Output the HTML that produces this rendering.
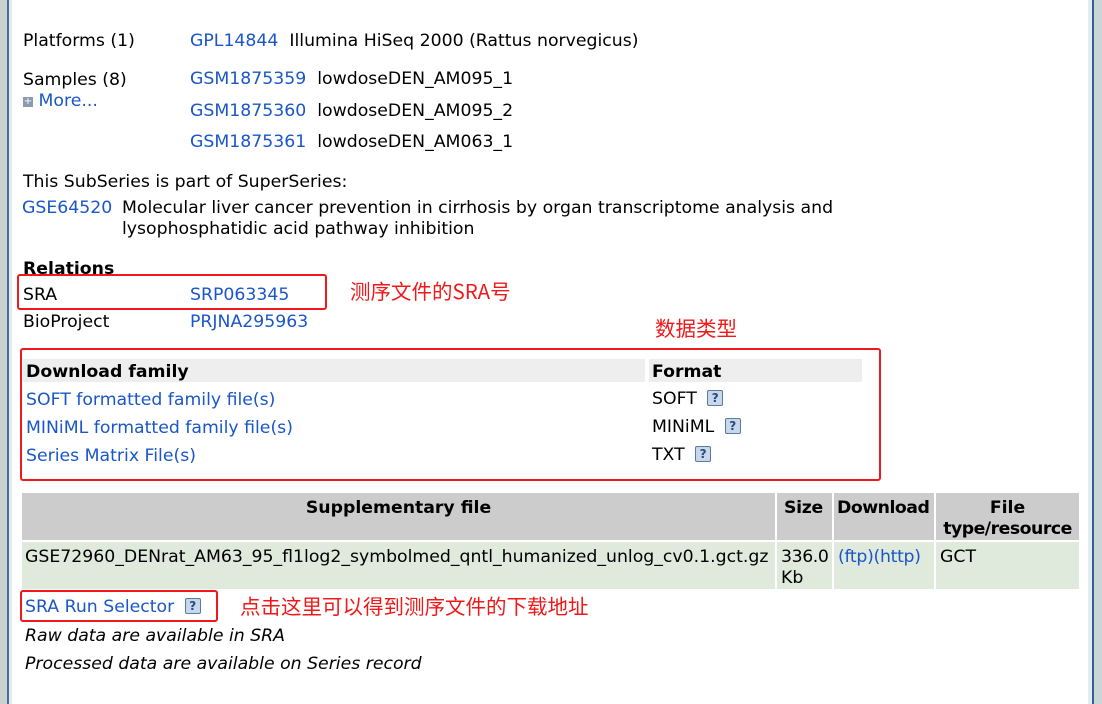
<!DOCTYPE html>
<html><head><meta charset="utf-8"><style>
body{margin:0;width:1102px;height:704px;position:relative;background:#fff;font-family:"DejaVu Sans","Liberation Sans",sans-serif;font-size:17.3px;color:#000;overflow:hidden}
.a{position:absolute;white-space:nowrap;line-height:20px;margin-top:1px}
.l{color:#1a56c8}
.b{font-weight:bold}
.r{position:absolute;border:2px solid #f01818;border-radius:3px}
.cn{position:absolute;color:#f01818;font-family:"Noto Sans CJK SC",sans-serif;font-size:20.5px;line-height:24px;white-space:nowrap}
.q{display:inline-block;width:14px;height:14px;border:1px solid #5a7aa0;background:#c8d8ec;color:#2a4a7a;font-size:12px;line-height:14px;text-align:center;font-weight:bold;vertical-align:2px;margin-left:5px;border-radius:2px}
.bx{position:absolute}
</style></head><body>
<div class="bx" style="left:0;top:0;width:7px;height:704px;background:#c9d1d1"></div>
<div class="bx" style="left:7px;top:0;width:2px;height:704px;background:#4a6a9a"></div>
<div class="bx" style="left:9px;top:0;width:3px;height:704px;background:#e1edf0"></div>
<div class="bx" style="left:1088px;top:0;width:4px;height:704px;background:#e1edf0"></div>
<div class="bx" style="left:1092px;top:0;width:2px;height:704px;background:#3a5a9a"></div>
<div class="bx" style="left:1094px;top:0;width:8px;height:704px;background:#c9d6d6"></div>

<div class="a" style="left:23px;top:30px">Platforms (1)</div>
<div class="a" style="left:190px;top:30px"><span class="l">GPL14844</span>&nbsp; Illumina HiSeq 2000 (Rattus norvegicus)</div>
<div class="a" style="left:23px;top:69px">Samples (8)</div>
<div class="a" style="left:23px;top:90px"><span style="display:inline-block;width:10px;height:10px;background:#8a9ab0;color:#fff;font-size:10px;line-height:10px;text-align:center;vertical-align:2px">+</span> <span class="l">More...</span></div>
<div class="a" style="left:190px;top:68px"><span class="l">GSM1875359</span>&nbsp; lowdoseDEN_AM095_1</div>
<div class="a" style="left:190px;top:100px"><span class="l">GSM1875360</span>&nbsp; lowdoseDEN_AM095_2</div>
<div class="a" style="left:190px;top:131px"><span class="l">GSM1875361</span>&nbsp; lowdoseDEN_AM063_1</div>
<div class="a" style="left:23px;top:171px">This SubSeries is part of SuperSeries:</div>
<div class="a" style="left:22px;top:197px" ><span class="l">GSE64520</span></div>
<div class="a" style="left:122px;top:197px">Molecular liver cancer prevention in cirrhosis by organ transcriptome analysis and</div>
<div class="a" style="left:122px;top:218px">lysophosphatidic acid pathway inhibition</div>
<div class="a b" style="left:23px;top:258px">Relations</div>
<div class="a" style="left:23px;top:284px">SRA</div>
<div class="a l" style="left:190px;top:284px">SRP063345</div>
<div class="a" style="left:23px;top:311px">BioProject</div>
<div class="a l" style="left:190px;top:311px">PRJNA295963</div>
<div class="r" style="left:17px;top:274px;width:306px;height:32px"></div>
<div class="cn" style="left:350px;top:278px">测序文件的SRA号</div>
<div class="cn" style="left:655px;top:315px">数据类型</div>

<div class="bx" style="left:23px;top:359px;width:622px;height:23px;background:#eeeeee"></div>
<div class="bx" style="left:649px;top:359px;width:213px;height:23px;background:#eeeeee"></div>
<div class="a b" style="left:26px;top:361px">Download family</div>
<div class="a b" style="left:652px;top:361px">Format</div>
<div class="a l" style="left:26px;top:389px">SOFT formatted family file(s)</div>
<div class="a l" style="left:26px;top:417px">MINiML formatted family file(s)</div>
<div class="a l" style="left:26px;top:445px">Series Matrix File(s)</div>
<div class="a" style="left:652px;top:388px">SOFT <span class="q">?</span></div>
<div class="a" style="left:652px;top:416px">MINiML <span class="q">?</span></div>
<div class="a" style="left:652px;top:444px">TXT <span class="q">?</span></div>
<div class="r" style="left:20px;top:348px;width:857px;height:129px"></div>

<div class="bx" style="left:22px;top:493px;width:753px;height:47px;background:#cccccc"></div>
<div class="bx" style="left:777px;top:493px;width:55px;height:47px;background:#cccccc"></div>
<div class="bx" style="left:834px;top:493px;width:100px;height:47px;background:#cccccc"></div>
<div class="bx" style="left:936px;top:493px;width:143px;height:47px;background:#cccccc"></div>
<div class="bx" style="left:22px;top:542px;width:753px;height:47px;background:#dfe9dc"></div>
<div class="bx" style="left:777px;top:542px;width:55px;height:47px;background:#dfe9dc"></div>
<div class="bx" style="left:834px;top:542px;width:100px;height:47px;background:#dfe9dc"></div>
<div class="bx" style="left:936px;top:542px;width:143px;height:47px;background:#dfe9dc"></div>
<div class="a b" style="left:22px;top:497px;width:753px;text-align:center">Supplementary file</div>
<div class="a b" style="left:784px;top:497px;letter-spacing:-0.3px">Size</div>
<div class="a b" style="left:837px;top:497px;letter-spacing:-0.5px">Download</div>
<div class="a b" style="left:936px;top:497px;width:143px;text-align:center">File</div>
<div class="a b" style="left:936px;top:518px;width:143px;text-align:center;letter-spacing:-0.5px">type/resource</div>
<div class="a" style="left:25px;top:546px">GSE72960_DENrat_AM63_95_fl1log2_symbolmed_qntl_humanized_unlog_cv0.1.gct.gz</div>
<div class="a" style="left:781px;top:546px;letter-spacing:-0.4px">336.0</div>
<div class="a" style="left:781px;top:567px">Kb</div>
<div class="a l" style="left:838px;top:546px;letter-spacing:-0.3px">(ftp)(http)</div>
<div class="a" style="left:940px;top:546px">GCT</div>

<div class="a" style="left:25px;top:596px"><span class="l">SRA Run Selector</span> <span class="q">?</span></div>
<div class="r" style="left:20px;top:590px;width:194px;height:28px"></div>
<div class="cn" style="left:240px;top:593px">点击这里可以得到测序文件的下载地址</div>
<div class="a" style="left:25px;top:625px;font-style:italic">Raw data are available in SRA</div>
<div class="a" style="left:25px;top:653px;font-style:italic">Processed data are available on Series record</div>
</body></html>
